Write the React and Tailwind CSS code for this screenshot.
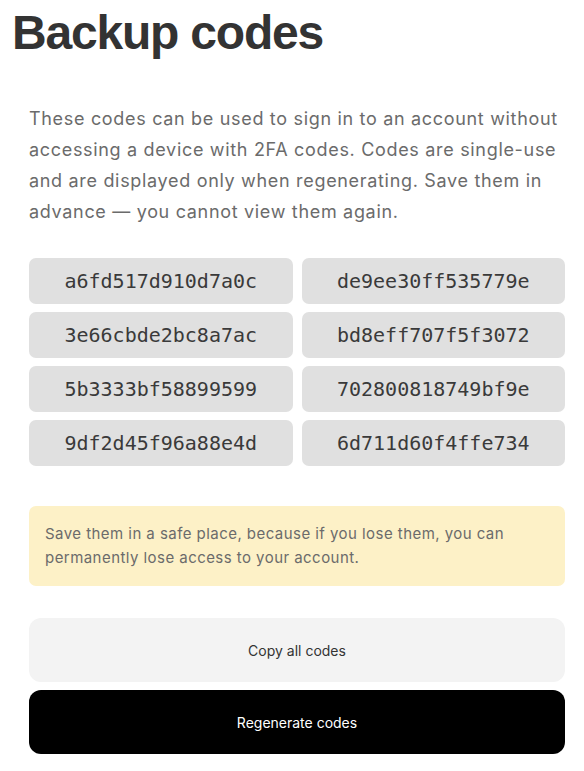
import React from "react";

const codes = [
  "a6fd517d910d7a0c",
  "de9ee30ff535779e",
  "3e66cbde2bc8a7ac",
  "bd8eff707f5f3072",
  "5b3333bf58899599",
  "702800818749bf9e",
  "9df2d45f96a88e4d",
  "6d711d60f4ffe734",
];

export default function App() {
  return (
    <div className="min-h-screen bg-white pt-[9px] font-['Inter',sans-serif]">
      <h1 className="pl-[12px] text-[48px] leading-none font-bold tracking-tight text-[#333333] font-['Liberation_Sans',Arial,sans-serif]">
        Backup codes
      </h1>

      <div className="pl-[29px] pr-[19px]">
        {/* description */}
        <p className="mt-[46px] text-[18px] leading-[31px] tracking-[0.68px] text-[#6b6b6b]">
          These codes can be used to sign in to an account without accessing a device with 2FA codes. Codes are
          single-use and are displayed only when regenerating. Save them in advance — you cannot view them again.
        </p>

        {/* codes */}
        <div className="mt-[31px] grid grid-cols-2 gap-x-[9px] gap-y-[8px]">
          {codes.map((c) => (
            <div
              key={c}
              className="h-[46px] flex items-center justify-center rounded-[7px] bg-[#e0e0e0] text-[20px] text-[#3a3a3a] font-['DejaVu_Sans_Mono','Liberation_Mono',monospace]"
            >
              {c}
            </div>
          ))}
        </div>

        {/* warning */}
        <div className="mt-[40px] rounded-[7px] bg-[#fdf1c7] px-[16px] py-[16px] text-[15px] leading-[24px] tracking-[0.45px] text-[#6b6b6b]">
          Save them in a safe place, because if you lose them, you can permanently lose access to your account.
        </div>

        {/* actions */}
        <div className="mt-[32px] flex flex-col gap-[8px]">
          <button className="h-[64px] rounded-[12px] bg-[#f3f3f3] text-[14px] text-[#333333]">Copy all codes</button>
          <button className="h-[64px] rounded-[12px] bg-black text-[14px] text-white">Regenerate codes</button>
        </div>
      </div>
    </div>
  );
}
